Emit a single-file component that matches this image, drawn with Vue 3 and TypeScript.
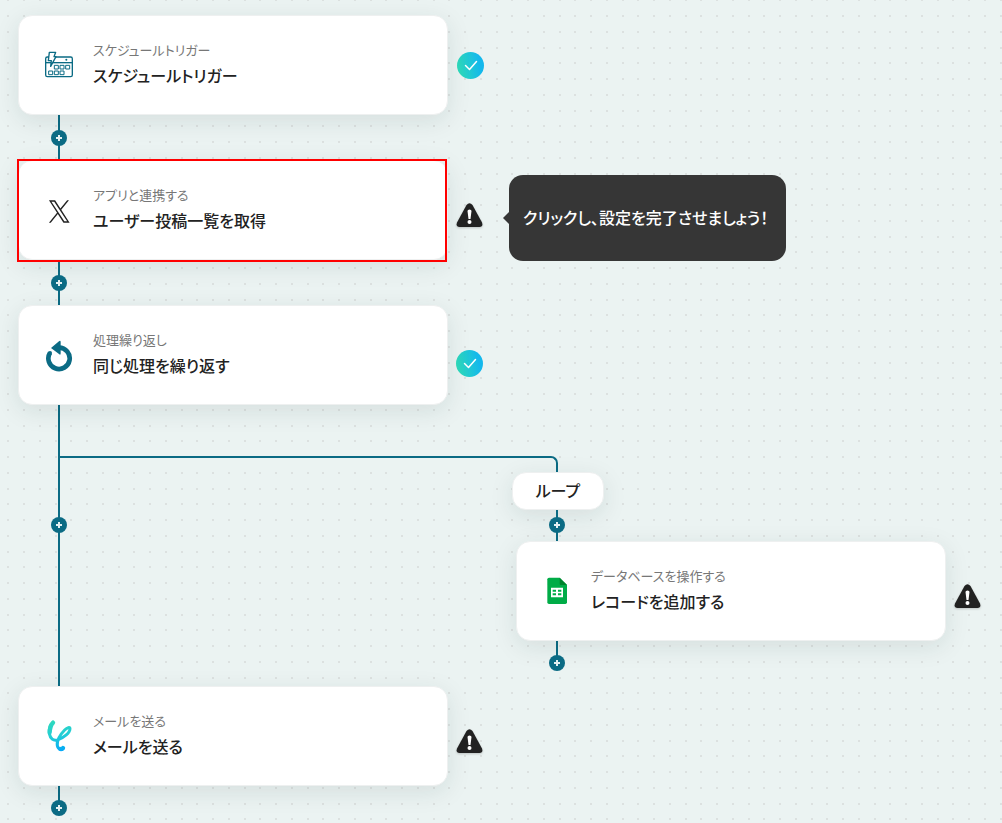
<script setup lang="ts">
type IconName = 'calendar' | 'x' | 'repeat' | 'sheet' | 'yoom'
type Status = 'done' | 'warn'

interface Step {
  id: string
  icon: IconName
  kind: string
  title: string
  status: Status
  low?: boolean
  selected?: boolean
  hint?: string
  branch?: { label: string; steps: Step[] }
}

const steps: Step[] = [
  {
    id: 'trigger',
    icon: 'calendar',
    kind: 'スケジュールトリガー',
    title: 'スケジュールトリガー',
    status: 'done',
  },
  {
    id: 'posts',
    icon: 'x',
    kind: 'アプリと連携する',
    title: 'ユーザー投稿一覧を取得',
    status: 'warn',
    selected: true,
    hint: 'クリックし、設定を完了させましょう！',
  },
  {
    id: 'repeat',
    icon: 'repeat',
    kind: '処理繰り返し',
    title: '同じ処理を繰り返す',
    status: 'done',
    low: true,
    branch: {
      label: 'ループ',
      steps: [
        {
          id: 'record',
          icon: 'sheet',
          kind: 'データベースを操作する',
          title: 'レコードを追加する',
          status: 'warn',
        },
      ],
    },
  },
  {
    id: 'mail',
    icon: 'yoom',
    kind: 'メールを送る',
    title: 'メールを送る',
    status: 'warn',
  },
]

const dots = [0, 16, 32, 48].flatMap((y) => [7, 23, 39, 55].map((x) => ({ x, y })))
const statusText: Record<Status, string> = { done: '設定済み', warn: '未設定' }
</script>

<template>
  <main class="canvas">
    <svg class="grid" aria-hidden="true">
      <defs>
        <pattern id="dots" y="-1" width="63" height="63" patternUnits="userSpaceOnUse">
          <rect v-for="d in dots" :key="`${d.x}-${d.y}`" :x="d.x" :y="d.y" width="2" height="2" fill="#dce1e0" />
        </pattern>
        <linearGradient id="grad-done" x1="0" y1="0.6" x2="1" y2="0.4">
          <stop offset="0" stop-color="#2fdcb8" />
          <stop offset="0.85" stop-color="#14b8ec" />
        </linearGradient>
        <linearGradient id="grad-yoom" gradientUnits="userSpaceOnUse" x1="40" y1="5" x2="60" y2="96">
          <stop offset="0" stop-color="#30d9bd" />
          <stop offset="0.5" stop-color="#22cdd6" />
          <stop offset="1" stop-color="#04a8f8" />
        </linearGradient>

        <symbol id="icon-calendar" viewBox="0 0 102 102">
          <g fill="none" stroke="#0b6b84" stroke-width="4" stroke-linejoin="round">
            <rect x="11" y="27" width="80" height="59" rx="5" />
            <path d="M11 44H91" />
            <path d="M22 13H41L36 26H42L26 55L28 38H19Z" fill="#fff" />
            <g stroke-width="3">
              <rect x="37" y="52" width="12" height="11" />
              <rect x="54" y="52" width="12" height="11" />
              <rect x="71" y="52" width="12" height="11" />
              <rect x="20" y="69" width="12" height="11" />
              <rect x="37" y="69" width="12" height="11" />
              <rect x="54" y="69" width="12" height="11" />
            </g>
          </g>
          <circle cx="73" cy="35" r="3" fill="#0b6b84" />
        </symbol>
        <symbol id="icon-x" viewBox="0 0 102 102">
          <path
            transform="translate(18 19) scale(2.82 3.04)"
            fill="#222"
            d="M14.1 10.3 22.3 1h-1.95L13.2 9.1 7.55 1H1l8.6 12.2L1 23h1.94l7.5-8.5L16.45 23H23ZM11.4 13.3l-.87-1.2L3.64 2.43h2.98l5.6 7.82.87 1.22 7.25 10.17h-2.97Z"
          />
        </symbol>
        <symbol id="icon-repeat" viewBox="0 0 102 102">
          <path d="M51 29A32 32 0 1 1 24 44" fill="none" stroke="#0b6b84" stroke-width="14" />
          <path d="M27 30 51 10Q56 6 56 13V46Q56 53 51 48Z" fill="#0b6b84" />
          <circle cx="24" cy="45" r="6" fill="#0b6b84" />
        </symbol>
        <symbol id="icon-sheet" viewBox="0 0 102 102">
          <path d="M27 11H59L81 33V85Q81 90 76 90H27Q22 90 22 85V16Q22 11 27 11Z" fill="#00ac47" />
          <path d="M59 11 81 33H62Q59 33 59 30Z" fill="#00832d" />
          <path
            d="M33 41H69V70H33ZM38 47V53H48V47ZM54 47V53H64V47ZM38 58V64H48V58ZM54 58V64H64V58Z"
            fill="#fff"
            fill-rule="evenodd"
          />
        </symbol>
        <symbol id="icon-yoom" viewBox="0 0 102 102">
          <g fill="none" stroke="url(#grad-yoom)" stroke-linecap="round" stroke-linejoin="round">
            <path
              d="M33 10C25 16 20 30 22 44C25 59 34 66 46 63C64 58 84 41 84 29C84 23 76 25 68 33C55 46 43 66 46 80C49 93 59 93 64 88"
              stroke-width="9"
            />
            <path d="M33 11C28 16 24 26 23 40" stroke-width="13" />
            <path d="M55 90Q60 91 63 87" stroke-width="13" />
          </g>
        </symbol>
        <symbol id="status-done" viewBox="0 0 54 54">
          <circle cx="27" cy="27" r="27" fill="url(#grad-done)" />
          <path d="M17 27 25 35 39 19" fill="none" stroke="#fff" stroke-width="3" stroke-linecap="round" stroke-linejoin="round" />
        </symbol>
        <symbol id="status-warn" viewBox="0 0 54 48">
          <path d="M21 4Q27-3 33 4L52 39Q55 48 47 48H7Q-1 48 2 39Z" fill="#222" />
          <path d="M23 16Q23 13 27 13T31 16L29 32H25Z" fill="#fff" />
          <circle cx="27" cy="38" r="4" fill="#fff" />
        </symbol>
      </defs>
      <rect width="100%" height="100%" fill="url(#dots)" />
    </svg>

    <div class="flow">
      <template v-for="(step, i) in steps" :key="step.id">
        <div class="step">
          <button type="button" class="card" :class="{ selected: step.selected }">
            <svg class="icon" aria-hidden="true"><use :href="`#icon-${step.icon}`" /></svg>
            <span class="text">
              <span class="kind">{{ step.kind }}</span>
              <span class="title">{{ step.title }}</span>
            </span>
          </button>
          <svg class="status" :class="[step.status, { low: step.low }]" role="img" :aria-label="statusText[step.status]">
            <use :href="`#status-${step.status}`" />
          </svg>
          <div v-if="step.hint" class="hint" role="tooltip">{{ step.hint }}</div>
        </div>

        <div v-if="step.branch" class="fork">
          <div class="link rail">
            <button type="button" class="add" aria-label="ステップを追加"></button>
          </div>
          <div class="branch">
            <div class="elbow"></div>
            <div class="label">{{ step.branch.label }}</div>
            <div class="link short">
              <button type="button" class="add" aria-label="ステップを追加"></button>
            </div>
            <template v-for="child in step.branch.steps" :key="child.id">
              <div class="step">
                <button type="button" class="card">
                  <svg class="icon" aria-hidden="true"><use :href="`#icon-${child.icon}`" /></svg>
                  <span class="text">
                    <span class="kind">{{ child.kind }}</span>
                    <span class="title">{{ child.title }}</span>
                  </span>
                </button>
                <svg class="status" :class="child.status" role="img" :aria-label="statusText[child.status]">
                  <use :href="`#status-${child.status}`" />
                </svg>
              </div>
              <div class="link end">
                <button type="button" class="add" aria-label="ステップを追加"></button>
              </div>
            </template>
          </div>
        </div>
        <div v-else class="link" :class="{ end: i === steps.length - 1 }">
          <button type="button" class="add" aria-label="ステップを追加"></button>
        </div>
      </template>
    </div>
  </main>
</template>

<style>
body {
  margin: 0;
  background: #ebf3f2;
}
</style>

<style scoped>
.canvas {
  position: relative;
  box-sizing: border-box;
  min-height: 100vh;
  padding: 15px 18px 0;
  overflow: hidden;
  color: #222;
  font-family: 'Noto Sans CJK JP', 'Noto Sans', sans-serif;
  font-feature-settings: 'palt';
}
.grid {
  position: absolute;
  inset: 0;
  width: 100%;
  height: 100%;
}
.flow {
  position: relative;
}
.step {
  display: flex;
  align-items: center;
}
.card {
  position: relative;
  z-index: 1;
  display: flex;
  align-items: center;
  gap: 17px;
  flex: 0 0 auto;
  box-sizing: border-box;
  width: 430px;
  height: 100px;
  padding: 0 23px;
  border: 1px solid #eef0f0;
  border-radius: 14px;
  background: #fff;
  box-shadow: 0 6px 24px rgba(20, 50, 50, 0.1);
  color: inherit;
  font: inherit;
  font-feature-settings: inherit;
  text-align: left;
  cursor: pointer;
}
.card.selected::after {
  content: '';
  position: absolute;
  inset: -2px 0 -3px -2px;
  border: 2px solid #f00;
}
.icon {
  width: 34px;
  height: 34px;
  flex: none;
}
.text {
  display: flex;
  flex-direction: column;
  padding-bottom: 6px;
}
.kind {
  color: #777;
  font-size: 13px;
  line-height: 26px;
}
.title {
  font-size: 16px;
  font-weight: 500;
  line-height: 24px;
}
.status {
  flex: none;
  width: 27px;
  height: 27px;
  margin-left: 9px;
}
.status.warn {
  height: 24px;
  margin-top: 10px;
  margin-left: 8px;
  filter: drop-shadow(0 1px 1px rgba(0, 0, 0, 0.2));
}
.status.low {
  margin-top: 17px;
  margin-left: 8px;
}
.hint {
  position: relative;
  display: flex;
  align-items: center;
  box-sizing: border-box;
  height: 86px;
  margin: 15px 0 -1px 26px;
  padding: 0 18px 2px 14px;
  border-radius: 14px;
  background: #363636;
  color: #fff;
  font-size: 16px;
  font-weight: 500;
  white-space: nowrap;
}
.hint::before {
  content: '';
  position: absolute;
  top: 37px;
  left: -6px;
  border: 6px solid transparent;
  border-right-color: #363636;
  border-left-width: 0;
}
.link {
  box-sizing: border-box;
  width: 82px;
  height: 45px;
  padding: 15px 33px 0;
  background: linear-gradient(#0b6b84, #0b6b84) center / 2px 100% no-repeat;
}
.link.short {
  height: 31px;
  padding-top: 7px;
}
.link.end {
  height: 30px;
  padding-top: 14px;
}
.add {
  position: relative;
  z-index: 2;
  display: block;
  width: 16px;
  height: 16px;
  padding: 0;
  border: 0;
  border-radius: 50%;
  background:
    linear-gradient(#e4f0f2, #e4f0f2) center / 6px 2px no-repeat,
    linear-gradient(#e4f0f2, #e4f0f2) center / 2px 6px no-repeat,
    #0b6b84;
  cursor: pointer;
}
.link.end {
  background-size: 2px 16px;
  background-position: top;
}
.fork {
  display: flex;
}
.link.rail {
  flex: none;
  height: auto;
  padding-top: 112px;
}
.branch {
  padding: 51px 0 15px 416px;
}
.elbow {
  box-sizing: border-box;
  width: 500px;
  height: 16px;
  margin-left: -458px;
  border: solid #0b6b84;
  border-width: 2px 2px 0 0;
  border-top-right-radius: 7px;
}
.label {
  display: flex;
  align-items: center;
  justify-content: center;
  box-sizing: border-box;
  width: 92px;
  height: 38px;
  margin-left: -4px;
  padding-bottom: 2px;
  border: 1px solid #eef0f0;
  border-radius: 14px;
  background: #fff;
  box-shadow: 0 6px 24px rgba(20, 50, 50, 0.1);
  font-size: 16px;
  font-weight: 500;
}
</style>
